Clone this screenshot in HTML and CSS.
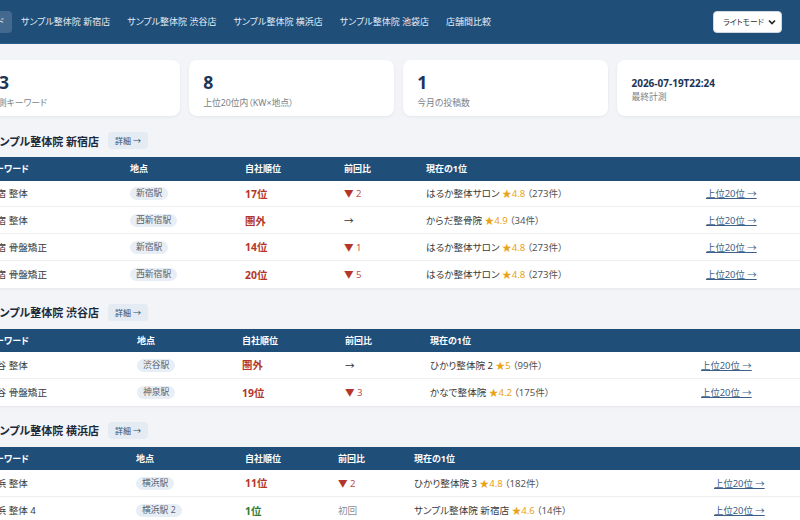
FILE: index.html
```html
<!DOCTYPE html>
<html lang="ja">
<head>
    <meta charset="UTF-8">
    <meta name="viewport" content="width=device-width, initial-scale=1.0">
    <title>順位ダッシュボード</title>
    <link rel="stylesheet" href="styles.css">
</head>
<body>
    <header class="topbar">
        <nav class="tabs">
            <a class="tab active" href="#">ダッシュボード</a>
            <a class="tab" href="#">サンプル整体院 新宿店</a>
            <a class="tab" href="#">サンプル整体院 渋谷店</a>
            <a class="tab" href="#">サンプル整体院 横浜店</a>
            <a class="tab" href="#">サンプル整体院 池袋店</a>
            <a class="tab" href="#">店舗間比較</a>
        </nav>
        <select class="theme">
            <option>ライトモード</option>
            <option>ダークモード</option>
        </select>
    </header>

    <main class="page">
        <div class="stats">
            <div class="stat">
                <div class="stat-value">13</div>
                <div class="stat-label">計測キーワード</div>
            </div>
            <div class="stat">
                <div class="stat-value">8</div>
                <div class="stat-label">上位20位内（KW×地点）</div>
            </div>
            <div class="stat">
                <div class="stat-value">1</div>
                <div class="stat-label">今月の投稿数</div>
            </div>
            <div class="stat">
                <div class="stat-value small">2026-07-19T22:24</div>
                <div class="stat-label">最終計測</div>
            </div>
        </div>

        <section class="store">
            <div class="store-head">
                <h2>サンプル整体院 新宿店</h2>
                <a class="detail" href="#">詳細 →</a>
            </div>
            <table class="rank-table t1">
                <thead>
                    <tr><th>キーワード</th><th>地点</th><th>自社順位</th><th>前回比</th><th>現在の1位</th><th></th></tr>
                </thead>
                <tbody>
                    <tr>
                        <td>新宿 整体</td>
                        <td><span class="pill">新宿駅</span></td>
                        <td class="rank">17位</td>
                        <td class="diff down"><span class="tri">▼</span> 2</td>
                        <td>はるか整体サロン <span class="star">★4.8</span><span class="count">（273件）</span></td>
                        <td><a class="more" href="#">上位20位 →</a></td>
                    </tr>
                    <tr>
                        <td>新宿 整体</td>
                        <td><span class="pill">西新宿駅</span></td>
                        <td class="rank">圏外</td>
                        <td class="diff">→</td>
                        <td>からだ整骨院 <span class="star">★4.9</span><span class="count">（34件）</span></td>
                        <td><a class="more" href="#">上位20位 →</a></td>
                    </tr>
                    <tr>
                        <td>新宿 骨盤矯正</td>
                        <td><span class="pill">新宿駅</span></td>
                        <td class="rank">14位</td>
                        <td class="diff down"><span class="tri">▼</span> 1</td>
                        <td>はるか整体サロン <span class="star">★4.8</span><span class="count">（273件）</span></td>
                        <td><a class="more" href="#">上位20位 →</a></td>
                    </tr>
                    <tr>
                        <td>新宿 骨盤矯正</td>
                        <td><span class="pill">西新宿駅</span></td>
                        <td class="rank">20位</td>
                        <td class="diff down"><span class="tri">▼</span> 5</td>
                        <td>はるか整体サロン <span class="star">★4.8</span><span class="count">（273件）</span></td>
                        <td><a class="more" href="#">上位20位 →</a></td>
                    </tr>
                </tbody>
            </table>
        </section>

        <section class="store">
            <div class="store-head">
                <h2>サンプル整体院 渋谷店</h2>
                <a class="detail" href="#">詳細 →</a>
            </div>
            <table class="rank-table t2">
                <thead>
                    <tr><th>キーワード</th><th>地点</th><th>自社順位</th><th>前回比</th><th>現在の1位</th><th></th></tr>
                </thead>
                <tbody>
                    <tr>
                        <td>渋谷 整体</td>
                        <td><span class="pill">渋谷駅</span></td>
                        <td class="rank">圏外</td>
                        <td class="diff">→</td>
                        <td>ひかり整体院 2 <span class="star">★5</span><span class="count">（99件）</span></td>
                        <td><a class="more" href="#">上位20位 →</a></td>
                    </tr>
                    <tr>
                        <td>渋谷 骨盤矯正</td>
                        <td><span class="pill">神泉駅</span></td>
                        <td class="rank">19位</td>
                        <td class="diff down"><span class="tri">▼</span> 3</td>
                        <td>かなで整体院 <span class="star">★4.2</span><span class="count">（175件）</span></td>
                        <td><a class="more" href="#">上位20位 →</a></td>
                    </tr>
                </tbody>
            </table>
        </section>

        <section class="store">
            <div class="store-head">
                <h2>サンプル整体院 横浜店</h2>
                <a class="detail" href="#">詳細 →</a>
            </div>
            <table class="rank-table t3">
                <thead>
                    <tr><th>キーワード</th><th>地点</th><th>自社順位</th><th>前回比</th><th>現在の1位</th><th></th></tr>
                </thead>
                <tbody>
                    <tr>
                        <td>横浜 整体</td>
                        <td><span class="pill">横浜駅</span></td>
                        <td class="rank">11位</td>
                        <td class="diff down"><span class="tri">▼</span> 2</td>
                        <td>ひかり整体院 3 <span class="star">★4.8</span><span class="count">（182件）</span></td>
                        <td><a class="more" href="#">上位20位 →</a></td>
                    </tr>
                    <tr>
                        <td>横浜 整体 4</td>
                        <td><span class="pill">横浜駅 2</span></td>
                        <td class="rank top">1位</td>
                        <td class="diff new">初回</td>
                        <td>サンプル整体院 新宿店 <span class="star">★4.6</span><span class="count">（14件）</span></td>
                        <td><a class="more" href="#">上位20位 →</a></td>
                    </tr>
                </tbody>
            </table>
        </section>
    </main>
</body>
</html>
```

FILE: styles.css
```css
:root{
    --navy:#1f4e79;
    --ink:#1d3557;
    --red:#b3362b;
    --green:#2e7d32;
    --star:#e8a317;
    --bg:#f2f4f7;
}
*{
    box-sizing: border-box;
}
body{
    margin: 0;
    background-color: var(--bg);
    font-family: "Noto Sans", "Noto Sans CJK JP", sans-serif;
    font-feature-settings: "palt";
    font-size: 9.6px;
    color: #333;
    overflow: hidden;
    height: 520px;
}
a{
    color: inherit;
    text-decoration: none;
}

/* top bar */
.topbar{
    height: 44px;
    background-color: var(--navy);
    display: flex;
    align-items: center;
    justify-content: space-between;
    padding-right: 18px;
    border-bottom: 1px solid #2d5d8a;
}
.tabs{
    display: flex;
    gap: 1px;
    margin-left: -60px;
}
.tab{
    color: #e6edf5;
    font-size: 9px;
    line-height: 22px;
    padding: 0 8px;
    border-radius: 4px;
}
.tab.active{
    background-color: rgba(255, 255, 255, 0.16);
}
.theme{
    appearance: none;
    height: 22px;
    width: 69px;
    font-family: inherit;
    font-feature-settings: "palt";
    font-size: 7.8px;
    border: 1px solid #d0d7e0;
    border-radius: 4px;
    color: #333;
    padding: 0 0 0 9px;
    background: #fff url("data:image/svg+xml,%3Csvg xmlns='http://www.w3.org/2000/svg' width='8' height='6' viewBox='0 0 8 6'%3E%3Cpath d='M1 1.5l3 3 3-3' fill='none' stroke='%23222' stroke-width='1.6'/%3E%3C/svg%3E") no-repeat right 5px center;
}

/* page */
.page{
    margin-left: -25px;
    width: 847px;
    padding-top: 16px;
}
.stats{
    display: grid;
    grid-template-columns: repeat(4, 1fr);
    gap: 9.6px;
}
.stat{
    background-color: #fff;
    border-radius: 8px;
    box-shadow: 0 1px 3px rgba(0, 0, 0, 0.06);
    height: 56px;
    padding: 5px 14px 0;
    display: flex;
    flex-direction: column;
    justify-content: center;
}
.stat-value{
    font-size: 17.6px;
    font-weight: 700;
    line-height: 21px;
    color: var(--ink);
}
.stat-value.small{
    font-size: 10px;
    line-height: 13px;
}
.stat-label{
    font-size: 8.8px;
    line-height: 13px;
    color: #7a7f87;
    margin-top: 4px;
}
.stat-value.small + .stat-label{
    margin-top: 1px;
}

/* store sections */
.store{
    margin-top: 16px;
}
.store-head{
    display: flex;
    align-items: center;
    gap: 9px;
    height: 17px;
    padding-left: 14px;
    margin-bottom: 8px;
}
.store-head h2{
    margin: 0;
    font-size: 11px;
    font-weight: 700;
    color: #1b2a3a;
}
.detail{
    background-color: #e4ebf3;
    color: #2a4d75;
    font-size: 8px;
    line-height: 17px;
    padding: 0 7px;
    border-radius: 4px;
}

.rank-table{
    width: 100%;
    table-layout: fixed;
    border-collapse: separate;
    border-spacing: 0;
    background-color: #fff;
    box-shadow: 0 1px 3px rgba(0, 0, 0, 0.06);
}
.rank-table th{
    background-color: var(--navy);
    color: #fff;
    font-size: 9px;
    font-weight: 700;
    text-align: left;
    height: 23.5px;
    padding: 0 12px;
}
.rank-table td{
    height: 26.75px;
    padding: 0 12px;
    border-bottom: 1px solid #eceef2;
    white-space: nowrap;
    color: #3a3a3a;
}
.rank-table tr:last-child td{
    border-bottom: 0;
}

.t1 th:nth-child(1){ width: 143px; }
.t1 th:nth-child(2){ width: 115px; }
.t1 th:nth-child(3){ width: 99px; }
.t1 th:nth-child(4){ width: 82px; }
.t1 th:nth-child(5){ width: 280px; }

.t2 th:nth-child(1){ width: 150px; }
.t2 th:nth-child(2){ width: 105px; }
.t2 th:nth-child(3){ width: 103px; }
.t2 th:nth-child(4){ width: 85px; }
.t2 th:nth-child(5){ width: 271px; }

.t3 th:nth-child(1){ width: 149px; }
.t3 th:nth-child(2){ width: 109px; }
.t3 th:nth-child(3){ width: 93px; }
.t3 th:nth-child(4){ width: 76px; }
.t3 th:nth-child(5){ width: 300px; }

.pill{
    display: inline-block;
    background-color: #e8eef5;
    color: #5a6470;
    font-size: 8.8px;
    line-height: 13px;
    padding: 0 6px;
    border-radius: 7px;
}
.rank-table .rank{
    color: var(--red);
    font-weight: 700;
    font-size: 10.4px;
}
.rank-table .rank.top{
    color: var(--green);
}
.rank-table .diff{
    color: #333;
}
.rank-table .diff.down{
    color: #c0504a;
}
.diff .tri{
    color: var(--red);
}
.rank-table .diff.new{
    color: #8a8f96;
}
.star{
    color: var(--star);
}
.count{
    color: #555;
    margin-left: 2px;
}
.more{
    color: #3d5f86;
    text-decoration: underline;
    font-size: 9.4px;
}
```
